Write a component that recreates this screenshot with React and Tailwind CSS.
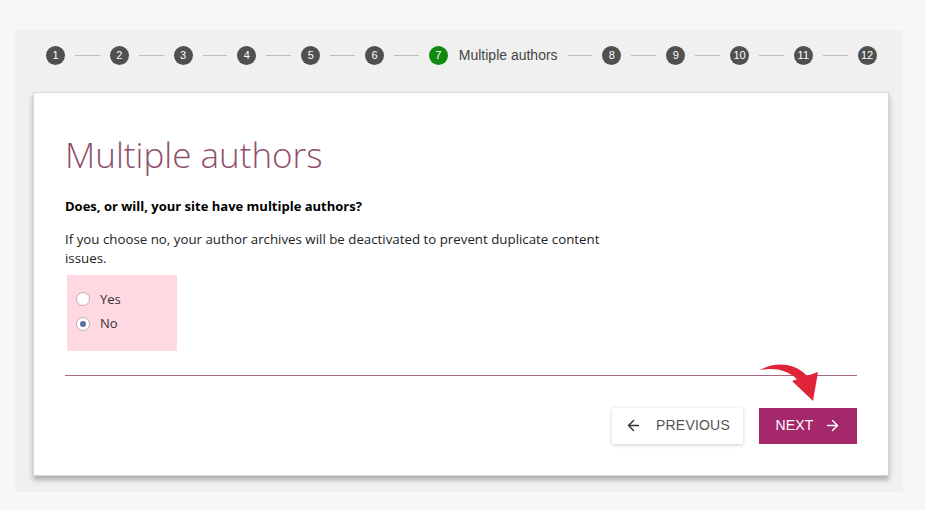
import { ArrowLeft, ArrowRight } from 'lucide-react';

const steps = [1, 2, 3, 4, 5, 6, 7, 8, 9, 10, 11, 12];

function Step({ n, active }) {
  return (
    <div className="flex items-center">
      <div
        className={
          active
            ? 'w-[19px] h-[19px] rounded-full bg-[#118a11] text-white text-[11px] flex items-center justify-center'
            : 'w-[19px] h-[19px] rounded-full bg-[#505050] text-white text-[11px] flex items-center justify-center'
        }
      >
        {n}
      </div>
      {active && <span className="ml-[11px] text-[14px] text-[#444]">Multiple authors</span>}
    </div>
  );
}

export default function App() {
  return (
    <div className="min-h-[510px] bg-[#f7f7f7] pt-[30px] pl-[15px] pr-[22px]" style={{ fontFamily: '"Liberation Sans", Arial, sans-serif' }}>
      <div className="bg-[#f0f0f0] pl-[18px] pr-[14px] h-[462px]">
        {/* stepper */}
        <div className="h-[50px] flex items-center pl-[13px]">
          {steps.map((n, i) => (
            <div key={n} className="flex items-center">
              <Step n={n} active={n === 7} />
              {i < steps.length - 1 && <div className="mx-[10px] w-[24.8px] h-px bg-[#bdbdbd]" />}
            </div>
          ))}
        </div>

        {/* card */}
        <div className="relative mt-[12px] bg-white border border-[#d8d8d8] shadow-[0_4px_5px_rgba(0,0,0,0.28)] h-[384px] px-[31px] pt-[40px]">
          <h1 className="text-[35px] leading-[44px] font-light text-[#8f4f6c]" style={{ fontFamily: '"Open Sans", sans-serif' }}>
            Multiple authors
          </h1>
          <p className="mt-[20px] text-[13px] font-bold text-black" style={{ fontFamily: '"Open Sans", sans-serif' }}>
            Does, or will, your site have multiple authors?
          </p>
          <p className="mt-[13px] text-[13.3px] leading-[19px] text-[#222] max-w-[545px]" style={{ fontFamily: '"Open Sans", sans-serif' }}>
            If you choose no, your author archives will be deactivated to prevent duplicate content issues.
          </p>

          <div className="mt-[7px] ml-[2px] w-[110px] h-[76px] bg-[#ffd9e2] pl-[9px] pt-[15px] flex flex-col gap-[5px]" style={{ fontFamily: '"Open Sans", sans-serif' }}>
            <label className="flex items-center gap-[10px] text-[13px] text-[#333]">
              <span className="w-[14px] h-[14px] rounded-full border border-[#c8aab4] bg-white" />
              Yes
            </label>
            <label className="flex items-center gap-[10px] text-[13px] text-[#333]">
              <span className="w-[14px] h-[14px] rounded-full border border-[#c8aab4] bg-white flex items-center justify-center">
                <span className="w-[6px] h-[6px] rounded-full bg-[#5a6f9a]" />
              </span>
              No
            </label>
          </div>

          <div className="mt-[24px] h-px bg-[#a3687f]" />

          <div className="mt-[32px] flex justify-end gap-[16px]">
            <button className="h-[36px] w-[131px] bg-white shadow-[0_1px_4px_rgba(0,0,0,0.2)] flex items-center justify-center gap-[14px] text-[14px] text-[#555] tracking-[0.2px]">
              <ArrowLeft size={17} strokeWidth={2} className="text-[#333]" />
              PREVIOUS
            </button>
            <button className="h-[36px] w-[98px] bg-[#a4286a] flex items-center justify-center gap-[10px] text-[14px] text-white tracking-[0.2px]">
              NEXT
              <ArrowRight size={17} strokeWidth={2} />
            </button>
          </div>

          {/* red pointer arrow */}
          <svg className="absolute left-[722px] top-[268px]" width="70" height="45" viewBox="0 0 70 45">
            <path d="M4 9 C 20 0, 40 2, 52 16 L 44 22 C 36 10, 20 6, 4 9 Z" fill="#e0243a" />
            <path d="M36 20 L 62 11 L 57 40 Z" fill="#e0243a" />
          </svg>
        </div>
      </div>
    </div>
  );
}
